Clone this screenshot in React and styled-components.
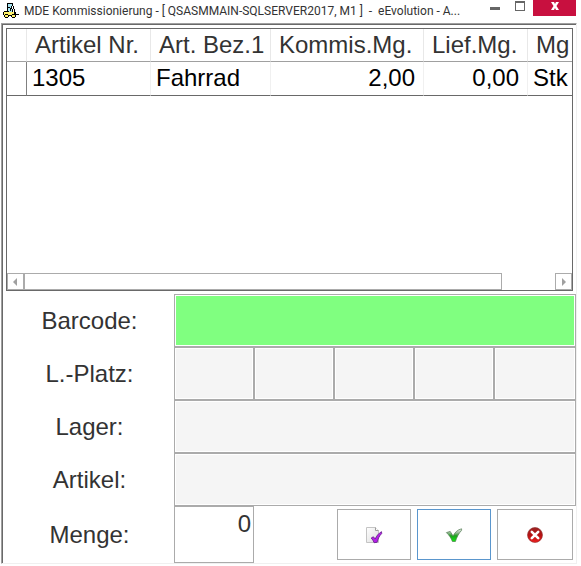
import React, { useState } from 'react';
import styled, { createGlobalStyle } from 'styled-components';

const GlobalStyle = createGlobalStyle`
  * {
    box-sizing: border-box;
  }

  body {
    margin: 0;
    background: #fff;
    color: #333;
    font-family: "Liberation Sans", Arial, sans-serif;
    font-size: 24px;
  }
`;

const Window = styled.div`
  padding: 0 4px 0 1px;
`;

const TitleBar = styled.header`
  display: flex;
  height: 23px;
  padding: 0 1px 0 2px;
`;

const TitleIcon = styled.svg`
  flex: none;
  width: 16px;
  height: 16px;
  margin-top: 3px;
`;

const Title = styled.h1`
  flex: 1;
  min-width: 0;
  margin: 0;
  padding-left: 5px;
  overflow: hidden;
  white-space: pre;
  color: #333;
  font: 400 12px/22px Roboto, "Segoe UI", sans-serif;
`;

const WindowButtons = styled.div`
  display: flex;
  flex: none;
  align-items: flex-start;
`;

const WindowButton = styled.button`
  display: flex;
  align-items: center;
  justify-content: center;
  width: ${(p) => (p.$close ? 43 : 25)}px;
  height: 16px;
  margin-left: ${(p) => (p.$close ? 1 : 0)}px;
  padding: 0;
  border: 0;
  background: ${(p) => (p.$close ? '#c8103f' : 'transparent')};
`;

const Frame = styled.main`
  border: 1px solid #f0f0f0;
  border-top-color: #a0a0a0;
  border-left-color: #a0a0a0;
`;

const FrameInner = styled.div`
  border-top: 1px solid #696969;
  border-left: 1px solid #696969;
`;

const GridPanel = styled.section`
  display: flex;
  flex-direction: column;
  height: 263px;
  margin: 3px;
  border: 1px solid #696969;
`;

const GridView = styled.div`
  flex: 1;
  min-height: 0;
  overflow: hidden;
`;

const Table = styled.table`
  width: 100%;
  table-layout: fixed;
  border-collapse: separate;
  border-spacing: 0;
`;

const Col = styled.col`
  width: ${(p) => (p.$width ? `${p.$width}px` : 'auto')};
`;

const HeadCell = styled.th`
  height: 33px;
  padding: 0 0 0 8px;
  overflow: hidden;
  border-right: 1px solid #e8e8e8;
  border-bottom: 1px solid #a0a0a0;
  text-align: left;
  font-weight: 400;
  line-height: 32px;
  white-space: nowrap;

  &:last-child {
    border-right: 0;
  }
`;

const Cell = styled.td`
  height: 34px;
  padding: 0 ${(p) => (p.$right ? 8 : 0)}px 1px 5px;
  overflow: hidden;
  border-right: 1px solid #f0f0f0;
  border-bottom: 1px solid #696969;
  color: #000;
  text-align: ${(p) => (p.$right ? 'right' : 'left')};
  line-height: 32px;
  white-space: nowrap;

  &:first-child {
    border-right-color: #808080;
  }

  &:last-child {
    border-right: 0;
  }
`;

const ScrollBar = styled.div`
  display: flex;
  height: 17px;
`;

const ScrollButton = styled.button`
  display: flex;
  flex: none;
  align-items: center;
  justify-content: center;
  width: 17px;
  padding: 0;
  border: 1px solid #ababab;
  background: #fff;
`;

const ScrollTrack = styled.div`
  display: flex;
  flex: 1;
`;

const ScrollThumb = styled.div`
  width: 90%;
  border: 1px solid #ababab;
`;

const Form = styled.form`
  display: grid;
  grid-template-columns: 171px 1fr;
  grid-template-rows: repeat(4, 53px) 57px;
`;

const Label = styled.label`
  display: flex;
  align-items: center;
  justify-content: center;
  padding: 1px 0 0 2px;
`;

const Field = styled.input`
  width: 100%;
  min-width: 0;
  height: 100%;
  padding: 0 4px;
  border: 1px solid #ababab;
  border-radius: 0;
  outline: 0;
  background: ${(p) => p.$fill || '#f5f5f5'};
  box-shadow: inset 0 0 0 1px #fff;
  color: #333;
  font: inherit;
`;

const Quantity = styled(Field)`
  width: 80px;
  padding: 0 2px 21px;
  text-align: right;
`;

const PlaceFields = styled.div`
  display: grid;
  grid-template-columns: repeat(4, 80px) minmax(80px, 1fr);
`;

const BottomRow = styled.div`
  display: flex;
  justify-content: space-between;
`;

const Actions = styled.div`
  display: flex;
  gap: 6px;
  padding: 3px 3px 3px 0;
`;

const ActionButton = styled.button`
  display: flex;
  align-items: center;
  justify-content: center;
  width: ${(p) => (p.$wide ? 76 : 74)}px;
  padding: 0;
  border: 1px solid ${(p) => (p.$active ? '#5a96cd' : '#ababab')};
  background: #fff;
`;

const columns = [
  { title: 'Artikel Nr.', width: 124 },
  { title: 'Art. Bez.1', width: 120 },
  { title: 'Kommis.Mg.', width: 153, right: true },
  { title: 'Lief.Mg.', width: 104, right: true },
  { title: 'Mg' },
];

const rows = [['1305', 'Fahrrad', '2,00', '0,00', 'Stk']];

const places = [1, 2, 3, 4, 5];

function ForkliftIcon() {
  return (
    <TitleIcon viewBox="0 0 16 16" shapeRendering="crispEdges" aria-hidden="true">
      <path d="M4 1h5v8H4z" fill="#a6e4f2" />
      <path d="M4 0h5v1H4zM4 1h1v8H4zM5 4h2v1H5zM7 5h1v3H7z" fill="#000" />
      <path d="M9 0h1v3H9zM10 3h1v3h-1zM11 6h1v3h-1zM12 9h1v2h-1zM8 3h1v3H8zM9 6h1v3H9z" fill="#000" />
      <path d="M1 9h10v3H1z" fill="#fff16a" />
      <path d="M0 9h1v3H0zM1 8h3v1H1zM5 8h1v1H5zM11 9h1v3h-1zM1 12h11v1H1zM12 11h4v1h-4z" fill="#000" />
      <path d="M2 12h3v3H2zM9 12h3v3H9z" fill="#fff16a" />
      <path d="M2 11h3v1H2zM1 12h1v2H1zM5 12h1v2H5zM2 14h3v1H2zM9 11h3v1H9zM8 12h1v2H8zM12 12h1v2h-1zM9 14h3v1H9z" fill="#000" />
    </TitleIcon>
  );
}

function DocumentCheckIcon() {
  return (
    <svg width="18" height="18" viewBox="0 0 18 18" aria-hidden="true">
      <defs>
        <linearGradient id="paper" x1="0" y1="0" x2="1" y2="1">
          <stop offset="0" stopColor="#fff" />
          <stop offset="1" stopColor="#dcdcdc" />
        </linearGradient>
      </defs>
      <path d="M1.5 1.5h9l3 3v12h-12z" fill="url(#paper)" stroke="#c4c4c4" />
      <path d="M10.5 1.5v3h3" fill="#fff" stroke="#9c9c9c" />
      <path d="M6.2 12l2.2-1.200 1.800 2.200c1.300-3 3.200-5.600 6.300-7.300l.2 1.800c-2.400 2.400-3.600 5-4.600 8.800l-3 .4c-.6-1.900-1.600-3.300-2.900-4.700z" fill="#b51ee8" stroke="#6c2391" strokeWidth=".9" />
    </svg>
  );
}

function CheckIcon() {
  return (
    <svg width="18" height="18" viewBox="0 0 18 18" aria-hidden="true">
      <defs>
        <linearGradient id="check" x1="0" y1="0" x2="0" y2="1">
          <stop offset="0" stopColor="#f0f0f0" />
          <stop offset=".3" stopColor="#9dbb9d" />
          <stop offset=".55" stopColor="#1fa01f" />
          <stop offset="1" stopColor="#10ea10" />
        </linearGradient>
      </defs>
      <path d="M1.400 6.600l3.800-1.200 2.900 4.600c1.600-3.400 4.400-6.400 8.500-7.200v1.500c-2.800 3-4.700 6.600-6.200 11.200h-3c-1.200-3.300-3.200-6.400-6-8.900z" fill="url(#check)" stroke="#4d7a4d" strokeWidth=".7" />
    </svg>
  );
}

function CancelIcon() {
  return (
    <svg width="18" height="18" viewBox="0 0 18 18" aria-hidden="true">
      <defs>
        <linearGradient id="cancel" x1="0" y1="0" x2="0" y2="1">
          <stop offset="0" stopColor="#9c2323" />
          <stop offset=".5" stopColor="#b51212" />
          <stop offset="1" stopColor="#ee2020" />
        </linearGradient>
      </defs>
      <circle cx="9" cy="9" r="7.500" fill="url(#cancel)" stroke="#8c2f2f" strokeWidth=".6" />
      <path d="M5.800 5.800l6.400 6.400M12.200 5.800l-6.400 6.400" stroke="#fff" strokeWidth="2.600" strokeLinecap="round" />
    </svg>
  );
}

export default function App() {
  const [barcode, setBarcode] = useState('');
  const [quantity, setQuantity] = useState('0');

  return (
    <>
      <GlobalStyle />
      <Window>
        <TitleBar>
          <ForkliftIcon />
          <Title>MDE Kommissionierung - [ QSASMMAIN-SQLSERVER2017, M1 ]  -  eEvolution - A...</Title>
          <WindowButtons>
            <WindowButton type="button" aria-label="Minimieren">
              <svg width="10" height="16" aria-hidden="true">
                <path d="M0 7h10v3H0z" fill="#666" />
              </svg>
            </WindowButton>
            <WindowButton type="button" aria-label="Maximieren">
              <svg width="10" height="16" shapeRendering="crispEdges" aria-hidden="true">
                <path d="M0 1h10v10H0zM1 3v7h8V3z" fill="#666" fillRule="evenodd" />
              </svg>
            </WindowButton>
            <WindowButton type="button" $close aria-label="Schließen">
              <svg width="10" height="16" aria-hidden="true">
                <path d="M1 2h3l1 2 1-2h3L6.500 6 9 10H6L5 8l-1 2H1l2.500-4z" fill="#fff" />
              </svg>
            </WindowButton>
          </WindowButtons>
        </TitleBar>

        <Frame>
          <FrameInner>
            <GridPanel>
              <GridView>
                <Table>
                  <colgroup>
                    <Col $width={20} />
                    {columns.map((c) => (
                      <Col key={c.title} $width={c.width} />
                    ))}
                  </colgroup>
                  <thead>
                    <tr>
                      <HeadCell />
                      {columns.map((c) => (
                        <HeadCell key={c.title} scope="col">{c.title}</HeadCell>
                      ))}
                    </tr>
                  </thead>
                  <tbody>
                    {rows.map((row) => (
                      <tr key={row[0]}>
                        <Cell />
                        {row.map((value, i) => (
                          <Cell key={columns[i].title} $right={columns[i].right}>{value}</Cell>
                        ))}
                      </tr>
                    ))}
                  </tbody>
                </Table>
              </GridView>
              <ScrollBar>
                <ScrollButton type="button" aria-label="Nach links">
                  <svg width="5" height="8" aria-hidden="true">
                    <path d="M4 0v8L0 4z" fill="#a0a0a0" />
                  </svg>
                </ScrollButton>
                <ScrollTrack>
                  <ScrollThumb />
                </ScrollTrack>
                <ScrollButton type="button" aria-label="Nach rechts">
                  <svg width="5" height="8" aria-hidden="true">
                    <path d="M1 0v8l4-4z" fill="#a0a0a0" />
                  </svg>
                </ScrollButton>
              </ScrollBar>
            </GridPanel>

            <Form onSubmit={(e) => e.preventDefault()}>
              <Label htmlFor="barcode">Barcode:</Label>
              <Field id="barcode" $fill="#80ff80" value={barcode} onChange={(e) => setBarcode(e.target.value)} />

              <Label htmlFor="platz-1">L.-Platz:</Label>
              <PlaceFields>
                {places.map((n) => (
                  <Field key={n} id={`platz-${n}`} aria-label={`L.-Platz ${n}`} readOnly />
                ))}
              </PlaceFields>

              <Label htmlFor="lager">Lager:</Label>
              <Field id="lager" readOnly />

              <Label htmlFor="artikel">Artikel:</Label>
              <Field id="artikel" readOnly />

              <Label htmlFor="menge">Menge:</Label>
              <BottomRow>
                <Quantity id="menge" $fill="#fff" value={quantity} onChange={(e) => setQuantity(e.target.value)} />
                <Actions>
                  <ActionButton type="button" aria-label="Beleg bestätigen">
                    <DocumentCheckIcon />
                  </ActionButton>
                  <ActionButton type="submit" $active aria-label="Übernehmen">
                    <CheckIcon />
                  </ActionButton>
                  <ActionButton type="button" $wide aria-label="Abbrechen">
                    <CancelIcon />
                  </ActionButton>
                </Actions>
              </BottomRow>
            </Form>
          </FrameInner>
        </Frame>
      </Window>
    </>
  );
}
